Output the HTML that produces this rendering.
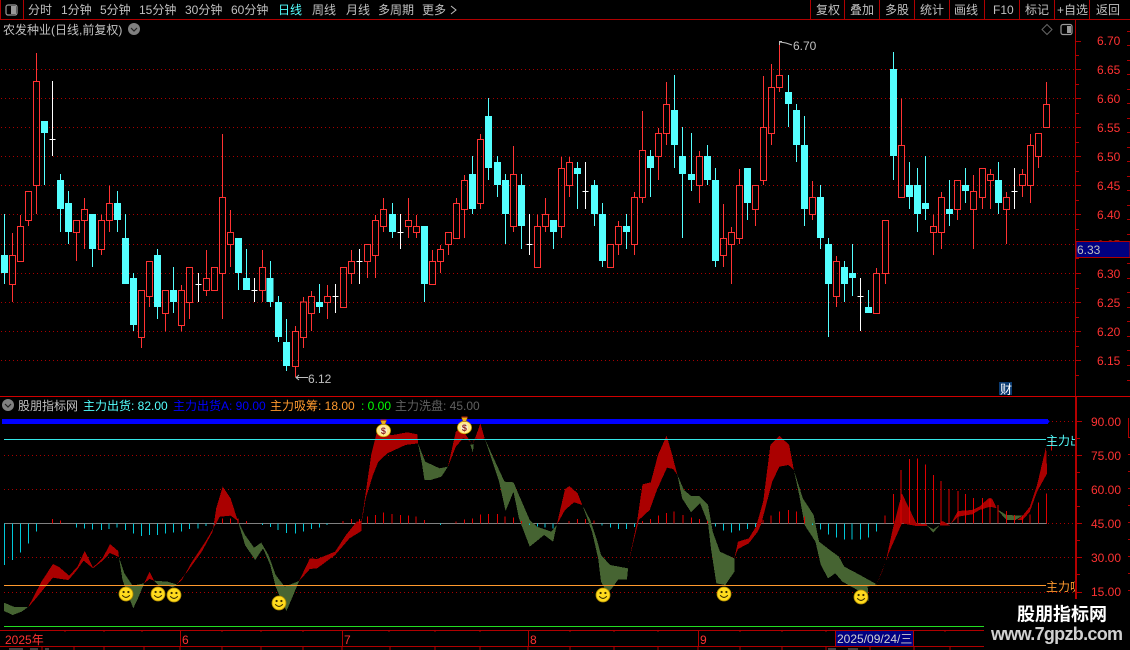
<!DOCTYPE html>
<html><head><meta charset="utf-8"><title>股朋指标网</title>
<style>
html,body{margin:0;padding:0;background:#000;width:1130px;height:650px;overflow:hidden}
svg{display:block}
text{font-family:"Liberation Sans","WenQuanYi Zen Hei","Noto Sans CJK SC",sans-serif;font-size:12px;white-space:pre}
.c{shape-rendering:crispEdges}
.r{fill:none;stroke:#ff3232;stroke-width:3}
.cw{fill:none;stroke:#54ffff;stroke-width:3}
.cb{fill:#54ffff;stroke:none}
.w{fill:none;stroke:#fff;stroke-width:3}
.t{fill:#c0c0c0}
.ax{fill:#ff3232}
</style></head>
<body>
<svg xmlns="http://www.w3.org/2000/svg" width="1130" height="650" viewBox="0 0 1130 650">
<defs>
<g id="sm"><circle r="7" fill="#ffdb1e" stroke="#b08c00" stroke-width=".8"/><circle cx="-2.400" cy="-2" r="1.100" fill="#3a2c00"/><circle cx="2.400" cy="-2" r="1.100" fill="#3a2c00"/><path d="M-3.800 1.200Q0 5.600 3.800 1.200" fill="none" stroke="#3a2c00" stroke-width="1.100"/></g>
<g id="bag"><ellipse cy="2.500" rx="7" ry="6.200" fill="#ffe98c" stroke="#d8a800" stroke-width=".8"/><path d="M-3-7.500H3L1.400-3.500H-1.400Z" fill="#e8b020" stroke="#a06000" stroke-width=".5"/><path d="M-3-8H3" stroke="#c02000" stroke-width="1"/><circle cy="2.500" r="3.600" fill="#f8f0d0"/><text x="-2.600" y="5.800" style="font-size:9px;font-weight:bold" fill="#902020">$</text></g>
</defs>
<rect width="1130" height="650" fill="#000"/>

<!-- top bar -->
<g class="c" fill="none" stroke="#b00000">
<path d="M0 19.500H1130M23.500 0V19M810.500 0V19M844.500 0V19M879.500 0V19M914.500 0V19M949.500 0V19M984.500 0V19M1019.500 0V19M1054.500 0V19M1089.500 0V19"/>
<path d="M.5 0V19"/>
</g>
<rect x="6" y="5" width="11" height="10" rx="2" fill="none" stroke="#999" stroke-width="1.200"/><rect x="11" y="6" width="5" height="8" fill="#999"/>
<g class="t">
<text x="28" y="14">分时</text><text x="61" y="14">1分钟</text><text x="100" y="14">5分钟</text><text x="139" y="14">15分钟</text><text x="185" y="14">30分钟</text><text x="231" y="14">60分钟</text>
<text x="278" y="14" fill="#54ffff">日线</text>
<text x="312" y="14">周线</text><text x="346" y="14">月线</text><text x="378" y="14">多周期</text><text x="422" y="14">更多</text>
<text x="816" y="14">复权</text><text x="850" y="14">叠加</text><text x="885" y="14">多股</text><text x="920" y="14">统计</text><text x="954" y="14">画线</text><text x="993" y="14">F10</text><text x="1025" y="14">标记</text><text x="1057" y="14">+自选</text><text x="1096" y="14">返回</text>
<text x="3" y="34">农发种业(日线,前复权)</text>
</g>
<path d="M451 6L456 10L451 14" fill="none" stroke="#c0c0c0"/>
<circle cx="134" cy="29" r="6" fill="#808080"/><path d="M131 28L134 31L137 28" fill="none" stroke="#222" stroke-width="1.200"/>
<path d="M1047 24.500L1052 29.500L1047 34.500L1042 29.500Z" fill="none" stroke="#666"/>
<rect x="1061" y="24.500" width="11" height="10" rx="2" fill="none" stroke="#999" stroke-width="1.200"/><rect x="1067" y="26" width="4" height="7" fill="#999"/>

<!-- upper grid -->
<g class="c" fill="none" stroke="#a80000" stroke-dasharray="1 3">
<path d="M1 69.500H1075M1 98.500H1075M1 127.500H1075M1 156.500H1075M1 185.500H1075M1 214.500H1075M1 244.500H1075M1 273.500H1075M1 302.500H1075M1 331.500H1075M1 360.500H1075"/>
</g>

<!-- candles strip 1 -->
<g class="c" transform="translate(0 45) scale(.33333)">
<path class="r" d="M37 564V631M28 631H46V718H28ZM37 718V771M61 510V544M52 544H70V650H52ZM76 439H94V527H76ZM85 527V543M109 24V109M100 109H118V421H100ZM109 421V507M220 526H238V563H220ZM229 563V648M253 459V493M244 493H262V527H244ZM253 527V612M304 509V526M295 526H313V614H295ZM304 614V630M328 421V475M319 475H337V527H319ZM328 527V561M415 736H433V878H415ZM424 878V909M439 649H457V755H439ZM448 755V786M487 736H505V806H487ZM496 806V859M544 720V736M535 736H553V842H535ZM544 842V859M559 667H577V773H559ZM568 773V822M619 615V700M610 700H628V737H610ZM619 737V753M634 667H652V737H634ZM667 267V457M658 457H676V685H658ZM667 685V822M691 495V562M682 562H700V599H682ZM691 599V666M787 615V667M778 667H796V737H778ZM787 737V771"/>
<path class="cw" d="M13 507V717M133 264V420M181 387V561M205 438V597M277 507V666M352 438V561M376 507V717M400 684V858M472 612V822M520 666V804M715 579V735M739 612V735"/>
<path class="cb" d="M3 630h21v54h-21zM123 228h21v36h-21zM171 405h21v87h-21zM195 474h21v87h-21zM267 507h21v105h-21zM342 474h21v51h-21zM366 579h21v138h-21zM390 699h21v141h-21zM462 630h21v156h-21zM510 735h21v36h-21zM705 579h21v105h-21zM729 699h21v36h-21z"/>
<path class="w" d="M157 108V333M148 283H166M595 684V771M586 718H604M763 699V771M754 736H772"/>
</g>
<!-- strip 2 -->
<g class="c" transform="translate(270 45) scale(.33333)">
<path class="r" d="M76 843V859M67 859H85V965H67ZM76 965V996M100 756V771M91 771H109V878H91ZM100 878V909M124 738V754M115 754H133V806H115ZM124 806V858M172 720V754M163 754H181V773H163ZM172 773V822M211 667H229V788H211ZM244 615V649M235 649H253V686H235ZM244 686V717M283 598H301V650H283ZM292 650V699M316 510V526M307 526H325V632H307ZM316 632V699M340 459V493M331 493H349V545H331ZM340 545V561M415 459V526M406 526H424V545H406ZM415 545V579M439 510V544M430 544H448V563H430ZM439 563V579M487 615V649M478 649H496V719H478ZM511 600V613M502 613H520V650H502ZM511 650V684M526 562H544V599H526ZM535 599V630M559 459V475M550 475H568V581H550ZM583 390V406M574 406H592V494H574ZM583 494V579M631 267V283M622 283H640V476H622ZM631 476V492M730 303V388M721 388H739V545H721ZM730 545V561M802 509V544M793 544H811V668H793Z"/>
<path class="cw" d="M1 648V786M25 753V891M49 822V978M148 717V804M367 474V579M463 543V771M607 333V507M655 159V405M682 333V456M706 387V597M754 387V612"/>
<path class="cb" d="M-10 699h21v72h-21zM15 771h21v105h-21zM39 891h21v72h-21zM138 771h21v15h-21zM357 507h21v54h-21zM453 543h21v174h-21zM597 387h21v105h-21zM645 213h21v156h-21zM672 351h21v69h-21zM696 405h21v102h-21zM744 420h21v123h-21z"/>
<path class="w" d="M196 717V804M187 754H205M268 612V717M259 649H277M391 507V612M382 562H400M778 507V630M769 598H787"/>
</g>
<!-- strip 3 -->
<g class="c" transform="translate(540 45) scale(.33333)">
<path class="r" d="M16 459V508M7 508H25V545H7ZM16 545V561M64 336V370M55 370H73V545H55ZM64 545V579M88 336V352M79 352H97V422H79ZM88 422V456M202 598H220V668H202ZM235 528V544M226 544H244V599H226ZM235 599V630M283 441V457M274 457H292V599H274ZM283 599V630M307 198V316M298 316H316V458H298ZM307 458V474M355 249V265M346 265H364V335H346ZM355 335V405M379 111V178M370 178H388V266H370ZM379 266V300M478 318V334M469 334H487V422H469ZM478 422V474M550 477V580M541 580H559V632H541ZM550 632V666M574 546V562M565 562H583V599H565ZM574 599V717M598 372V421M589 421H607V581H589ZM598 581V597M637 421H655V494H637ZM646 494V543M670 93V247M661 247H679V407H661ZM670 407V420M694 57V127M685 127H703V266H685ZM694 266V300M718 -7V91M709 91H727V128H709ZM718 128V141"/>
<path class="cw" d="M40 525V612M112 351V492M163 405V543M187 474V666M259 507V612M331 315V456M403 90V369M427 246V579M454 264V438M502 300V420M526 369V666M622 369V525M745 90V246M769 177V351M793 213V543"/>
<path class="cb" d="M30 525h21v36h-21zM102 369h21v18h-21zM153 420h21v87h-21zM177 507h21v141h-21zM249 543h21v18h-21zM321 333h21v36h-21zM393 195h21v105h-21zM417 333h21v54h-21zM444 387h21v18h-21zM492 333h21v72h-21zM516 405h21v243h-21zM612 369h21v105h-21zM735 141h21v36h-21zM759 195h21v105h-21zM783 300h21v192h-21z"/>
<path class="w" d="M136 351V492M127 439H145"/>
</g>
<!-- strip 4 -->
<g class="c" transform="translate(810 45) scale(.33333)">
<path class="r" d="M7 408V457M-2 457H16V509H-2ZM7 509V525M79 633V649M70 649H88V755H70ZM79 755V786M199 669V685M190 685H208V806H190ZM217 526H235V686H217ZM226 686V717M274 160V301M265 301H283V458H265ZM370 508V544M361 544H379V563H361ZM370 563V630M394 441V457M385 457H403V563H385ZM394 563V612M433 406H451V494H433ZM442 494V525M490 390V439M481 439H499V494H481ZM490 494V612M508 370H526V458H508ZM517 458V492M541 372V388M532 388H550V407H532ZM541 407V492M589 441V457M580 457H598V494H580ZM589 494V597M637 372V388M628 388H646V422H628ZM637 422V456M661 267V301M652 301H670V422H652ZM661 422V474M676 265H694V335H676ZM685 335V369M709 111V178M700 178H718V248H700Z"/>
<path class="cw" d="M31 420V612M55 579V876M103 648V771M127 597V753M175 735V804M250 21V405M298 351V492M322 369V561M346 333V525M418 405V543M466 369V474M565 351V507"/>
<path class="cb" d="M21 456h21v123h-21zM45 597h21v120h-21zM93 666h21v51h-21zM117 684h21v15h-21zM165 786h21v18h-21zM240 72h21v261h-21zM288 420h21v36h-21zM312 420h21v87h-21zM336 474h21v18h-21zM408 492h21v15h-21zM456 420h21v18h-21zM555 405h21v69h-21z"/>
<path class="w" d="M151 699V858M142 754H160M613 369V492M604 439H622"/>
</g>

<!-- hi/lo markers -->
<path d="M782 41.500H779.500V45M780 42L786 43L792 45" fill="none" stroke="#c0c0c0"/>
<text x="793" y="50" class="t">6.70</text>
<path d="M296 377.500H308M299 375L296 377.500L299 380" fill="none" stroke="#c0c0c0"/>
<text x="308" y="383" class="t">6.12</text>
<rect x="999" y="382" width="13" height="13" fill="#0a3a70"/>
<text x="1000" y="393.500" fill="#fff">财</text>

<!-- upper axis -->
<g class="c" fill="none" stroke="#b00000">
<path d="M1075.500 20V396M1076 41.500h5M1076 55.500h3M1076 69.500h5M1076 84.500h3M1076 98.500h5M1076 113.500h3M1076 127.500h5M1076 142.500h3M1076 156.500h5M1076 171.500h3M1076 185.500h5M1076 200.500h3M1076 214.500h5M1076 229.500h3M1076 258.500h3M1076 273.500h5M1076 288.500h3M1076 302.500h5M1076 317.500h3M1076 331.500h5M1076 346.500h3M1076 360.500h5M1076 375.500h3"/>
<path d="M1127 31.500h3M1127 45.500h3M1127 60.500h3M1127 74.500h3M1127 89.500h3M1127 103.500h3M1127 118.500h3M1127 132.500h3M1127 147.500h3M1127 161.500h3M1127 176.500h3M1127 190.500h3M1127 205.500h3M1127 219.500h3M1127 234.500h3M1127 263.500h3M1127 278.500h3M1127 292.500h3M1127 307.500h3M1127 321.500h3M1127 336.500h3M1127 350.500h3M1127 365.500h3M1127 380.500h3"/>
</g>
<g class="ax">
<text x="1097" y="45">6.70</text><text x="1097" y="74">6.65</text><text x="1097" y="103">6.60</text><text x="1097" y="132">6.55</text><text x="1097" y="161">6.50</text><text x="1097" y="190">6.45</text><text x="1097" y="219">6.40</text><text x="1097" y="249">6.35</text><text x="1097" y="278">6.30</text><text x="1097" y="307">6.25</text><text x="1097" y="336">6.20</text><text x="1097" y="365">6.15</text>
</g>
<rect x="1076" y="241.500" width="54" height="16" fill="#000080" stroke="#b00000"/>
<text x="1077" y="254" class="t">6.33</text>

<!-- divider -->
<path class="c" d="M0 396.500H1130" stroke="#d00000" fill="none"/>

<!-- lower title -->
<circle cx="8" cy="405" r="6" fill="#808080"/><path d="M5 404L8 407L11 404" fill="none" stroke="#222" stroke-width="1.200"/>
<text x="18" y="410" class="t">股朋指标网</text>
<text x="83" y="410" fill="#54ffff">主力出货: 82.00</text>
<text x="173" y="410" fill="#0000ff">主力出货A: 90.00</text>
<text x="270" y="410" fill="#ff9a2e">主力吸筹: 18.00</text>
<text x="361" y="410" fill="#00ff00">: 0.00</text>
<text x="395" y="410" fill="#606060">主力洗盘: 45.00</text>

<!-- lower grid -->
<g class="c" fill="none" stroke="#a80000" stroke-dasharray="1 3">
<path d="M4 421.500H1075M4 455.500H1075M4 489.500H1075M4 557.500H1075M4 592.500H1075M1048 523.500H1075"/>
</g>

<!-- histogram -->
<g class="c" fill="none">
<path stroke="#808080" d="M4 523.500H1047"/>
</g>

<g class="c" transform="translate(0 395) scale(.36036 .33333)">
<g fill="#aa0000">
<polygon points="78,637 115,560 147,507 165,517 192,542 215,515 235,468 258,517 285,490 305,447 328,468 330,486 305,474 285,497 258,520 232,497 210,530 190,555 170,552 147,548 130,570 100,610"/>
<polygon points="400,565 415,530 428,557 415,552"/>
<polygon points="490,568 520,530 560,470 590,410 600,340 618,275 640,310 660,378 640,362 610,365 600,385 570,440 530,505 505,555"/>
<polygon points="830,558 860,490 880,492 930,470 960,420 990,380 1003,378 1010,330 1030,180 1045,115 1090,120 1130,112 1158,118 1160,145 1125,150 1075,175 1050,200 1035,240 1015,310 1003,385 1003,408 970,430 930,480 880,520 860,522"/>
<polygon points="1243,215 1265,110 1285,95 1290,115 1310,148 1320,125 1333,85 1345,130 1330,135 1320,130 1310,148 1300,135 1285,130 1265,155"/>
</g>
<g fill="#466432">
<polygon points="11,623 40,636 78,636 60,650 35,660 11,648"/>
<polygon points="330,486 345,535 368,572 400,565 385,605 370,640 355,600 340,555"/>
<polygon points="428,557 465,560 490,568 480,577 460,570 440,572"/>
<polygon points="660,378 680,420 705,458 725,443 745,480 765,540 790,575 830,558 810,610 795,648 775,600 765,575 750,510 730,460 708,495 680,450"/>
<polygon points="1160,145 1180,200 1220,220 1243,215 1225,245 1195,255 1178,255 1170,200"/>
<polygon points="1305,148 1315,148 1312,172"/>
<polygon points="1345,130 1370,190 1400,260 1425,262 1440,300 1470,375 1490,395 1530,410 1545,390 1535,440 1510,420 1470,455 1440,370 1425,290 1403,348 1385,260"/>
</g>
<g fill="none">
<path vector-effect="non-scaling-stroke" stroke="#00c8d8" d="M12 385V510M34 385V495M57 385V473M79 385V445M101 385V410M212 385V397M234 385V400M256 385V404M281 385V405M303 385V402M325 385V398M348 385V405M370 385V416M392 385V423M415 385V420M437 385V420M459 385V416M481 385V413M503 385V410M526 385V402M550 385V400M572 385V393M594 385V388M728 385V390M750 385V396M772 385V405M795 385V414M820 385V416M842 385V410M864 385V402M886 385V398M908 385V390M1222 385V390M1470 385V390M1491 385V395M1513 385V398M1535 385V400"/>
<path vector-effect="non-scaling-stroke" stroke="#e00000" d="M145 385V372M168 385V376M617 385V370M639 385V370M661 385V370M684 385V378M952 385V378M975 385V372M997 385V372M1020 385V365M1042 385V360M1064 385V353M1088 385V357M1111 385V360M1133 385V362M1155 385V365M1178 385V375M1266 385V380M1289 385V373M1311 385V370M1333 385V359M1355 385V357M1380 385V357M1402 385V365M1425 385V368M1447 385V378"/>
</g>
</g>

<g class="c" transform="translate(565 395) scale(.36036 .33333)">
<g fill="#aa0000">
<polygon points="-23,390 0,283 12,273 35,295 48,330 25,322 0,345"/>
<polygon points="175,510 200,380 215,268 238,262 258,180 282,122 295,170 312,240 300,222 283,218 255,285 235,345 205,375 190,440"/>
<polygon points="470,490 480,440 510,430 530,395 550,320 570,150 595,122 622,150 635,225 620,210 595,215 575,260 545,385 535,410 510,445 480,462"/>
<polygon points="865,568 890,500 910,400 935,295 975,385 1005,388 1005,393 975,393 935,385 900,470 880,530"/>
<polygon points="1040,385 1048,378 1070,392 1040,392"/>
<polygon points="1070,388 1090,348 1130,345 1150,335 1175,310 1185,310 1198,340 1180,335 1150,345 1130,358 1090,365"/>
<polygon points="1270,362 1290,335 1310,270 1335,155 1338,235 1310,290 1290,350 1270,375 1255,375"/>
</g>
<g fill="#466432">
<polygon points="48,330 70,375 90,440 100,480 125,510 175,520 172,553 148,553 130,580 118,595 100,560 92,490 75,410 60,365"/>
<polygon points="312,240 330,285 350,303 372,303 397,330 410,410 430,470 470,490 470,530 445,570 420,565 405,460 397,385 375,325 350,352 325,310"/>
<polygon points="635,225 660,310 690,360 705,440 735,465 760,485 775,515 810,535 865,568 840,575 842,618 820,590 770,560 750,535 730,550 710,510 695,440 665,390 650,300"/>
<polygon points="1005,392 1022,403 1040,390 1022,413"/>
<polygon points="1198,342 1225,360 1270,362 1250,375 1225,375"/>
</g>
<g fill="none">
<path vector-effect="non-scaling-stroke" stroke="#00c8d8" d="M103 385V392M126 385V398M148 385V402M170 385V402M193 385V396M417 385V395M440 385V407M462 385V413M484 385V407M506 385V402M528 385V396M687 385V390M709 385V403M731 385V418M753 385V428M775 385V433M797 385V434M820 385V433M842 385V427M864 385V410"/>
<path vector-effect="non-scaling-stroke" stroke="#e00000" d="M11 385V378M34 385V372M57 385V372M80 385V376M215 385V378M237 385V372M259 385V362M281 385V354M303 385V350M328 385V360M351 385V368M373 385V372M395 385V378M550 385V375M572 385V362M595 385V350M620 385V345M642 385V350M664 385V365M888 385V362M911 385V297M933 385V225M956 385V192M978 385V190M1000 385V209M1022 385V240M1044 385V258M1066 385V282M1090 385V288M1111 385V297M1133 385V309M1159 385V309M1180 385V309M1202 385V330M1225 385V348M1247 385V360M1269 385V362M1291 385V358M1314 385V323M1336 385V296M1350 130V167"/>
</g>
</g>

<!-- level lines -->
<g class="c">
<rect x="2" y="419" width="1046" height="5" fill="#0000ff"/>
<path d="M1048 420L1050 421.500L1048 423Z" fill="#0000ff"/>
<path d="M4 439.500H1046" stroke="#34e6e6" fill="none"/>
<path d="M4 585.500H1046" stroke="#ff9a2e" fill="none"/>
<path d="M4 626.500H984" stroke="#22dd22" fill="none"/>
</g>
<svg x="1046" y="430" width="29" height="20" viewBox="0 0 29 20"><text x="0" y="15" fill="#54ffff">主力出货</text></svg>
<svg x="1046" y="576" width="29" height="20" viewBox="0 0 29 20"><text x="0" y="15" fill="#ff9a2e">主力吸筹</text></svg>

<use href="#sm" x="126" y="594"/><use href="#sm" x="158" y="594"/><use href="#sm" x="174" y="595"/><use href="#sm" x="279" y="603"/><use href="#sm" x="603" y="595"/><use href="#sm" x="724" y="594"/><use href="#sm" x="861" y="597"/>
<use href="#bag" x="383.500" y="428"/><use href="#bag" x="464.500" y="425"/>

<!-- lower axis -->
<g class="c" fill="none" stroke="#b40000">
<path stroke-width="2" d="M1076 397V599"/>
<path d="M1077 421.500h5M1077 438.500h3M1077 455.500h5M1077 472.500h3M1077 489.500h5M1077 506.500h3M1077 523.500h5M1077 540.500h3M1077 557.500h5M1077 574.500h3M1077 592.500h5"/>
<path d="M1128.500 418V437M1128 437.500h2M1128 454.500h2M1128 471.500h2M1128 488.500h2M1128 505.500h2M1128 522.500h2M1128 539.500h2M1128 556.500h2M1128 573.500h2M1128 590.500h2"/>
</g>
<g class="ax">
<text x="1091" y="426">90.00</text><text x="1091" y="460">75.00</text><text x="1091" y="494">60.00</text><text x="1091" y="528">45.00</text><text x="1091" y="562">30.00</text><text x="1091" y="596">15.00</text>
</g>

<!-- time axis -->
<g class="c" fill="none" stroke="#b00000">
<path d="M0 630.500H984M0 646.500H984M180.500 631V646M342.500 631V646M528.500 631V646M698.500 631V646"/>
<path d="M65 630v2M104 630v2M142 630v2M222 630v2M261 630v2M303 630v2M389 630v2M435 630v2M480 630v2M570 630v2M614 630v2M658 630v2M740 630v2M782 630v2M826 630v2M945 630v2"/>
<path d="M42 647v3M74 647v3M104 647v3M144 647v3M180 647v3M222 647v3M261 647v3M303 647v3M342 647v3M390 647v3M435 647v3M480 647v3M528 647v3M570 647v3M614 647v3M658 647v3M698 647v3M740 647v3M782 647v3M826 647v3M870 647v3M914 647v3M950 647v3"/>
</g>
<g class="ax">
<text x="5" y="644">2025年</text><text x="182" y="644">6</text><text x="344" y="644">7</text><text x="530" y="644">8</text><text x="700" y="644">9</text>
</g>
<rect x="835.500" y="630.500" width="78" height="16" fill="#000080" stroke="#b00000"/>
<text x="837" y="643" fill="#d0d0d0">2025/09/24/三</text>
<path class="c" d="M9 649h14M30 649h8M45 649h4M828 649h8M848 649h10" stroke="#808080" fill="none"/>

<!-- watermark -->
<rect x="984" y="600" width="146" height="50" fill="#000"/>
<text x="1017" y="620.500" fill="#fff" style="font-size:18px;font-weight:bold;font-family:'Noto Sans CJK SC','WenQuanYi Zen Hei',sans-serif">股朋指标网</text>
<text x="991" y="640" fill="#d0d0d0" textLength="132" style="font-size:18px;font-weight:bold">www.7gpzb.com</text>
</svg>
</body></html>
